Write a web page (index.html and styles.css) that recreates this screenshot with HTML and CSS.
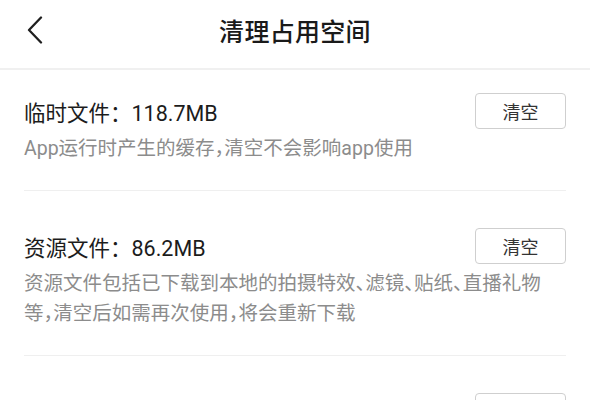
FILE: index.html
```html
<!DOCTYPE html>
<html lang="zh-CN">
<head>
<meta charset="utf-8">
<title>清理占用空间</title>
<link rel="stylesheet" href="styles.css">
</head>
<body>
<div class="page">
  <header class="topbar">
    <span class="back">
      <svg width="18" height="28" viewBox="0 0 18 28"><path d="M15 1.5 L3 14 L15 26.5" fill="none" stroke="#1f1f1f" stroke-width="2.3" stroke-linecap="round" stroke-linejoin="round"/></svg>
    </span>
    <h1 class="title">清理占用空间</h1>
  </header>
  <main class="list">
    <section class="item">
      <div class="item-head">
        <div class="item-title">临时文件：118.7MB</div>
        <button class="btn">清空</button>
      </div>
      <p class="item-desc">App运行时产生的缓存，清空不会影响app使用</p>
    </section>
    <section class="item">
      <div class="item-head">
        <div class="item-title">资源文件：86.2MB</div>
        <button class="btn">清空</button>
      </div>
      <p class="item-desc">资源文件包括已下载到本地的拍摄特效、滤镜、贴纸、直播礼物等，清空后如需再次使用，将会重新下载</p>
    </section>
    <section class="item">
      <div class="item-head">
        <div class="item-title">缓存文件：32.5MB</div>
        <button class="btn">清空</button>
      </div>
      <p class="item-desc">浏览视频时产生的缓存文件</p>
    </section>
  </main>
</div>
</body>
</html>
```
FILE: styles.css
```css
* { box-sizing: border-box; }
html, body { margin: 0; padding: 0; background: #fff; }
body {
  font-family: Roboto, "Noto Sans CJK SC", sans-serif;
  font-feature-settings: "halt";
  color: #1a1a1a;
  width: 590px;
  height: 400px;
  overflow: hidden;
}
.topbar {
  position: relative;
  height: 70px;
  padding-bottom: 8px;
  border-bottom: 2px solid #f0f0f0;
  display: flex;
  align-items: center;
  justify-content: center;
}
.back {
  position: absolute;
  left: 26px;
  top: 16px;
  width: 18px;
  height: 28px;
  display: block;
}
.back svg { display: block; }
.title {
  margin: 0;
  font-size: 25px;
  font-weight: 500;
  color: #1a1a1a;
  letter-spacing: 0.3px;
}
.list { padding: 0 24px; }
.item {
  padding: 37px 0 26px;
  border-bottom: 1px solid #efefef;
}
.item:first-child { padding-top: 23px; }
.item-head {
  display: flex;
  align-items: center;
  justify-content: space-between;
  height: 36px;
}
.item-title {
  font-size: 21.5px;
  color: #1c1c1c;
  font-feature-settings: normal;
}
.btn {
  width: 91px;
  height: 36px;
  border: 1px solid #cfcfcf;
  border-radius: 4px;
  background: #fff;
  font-family: inherit;
  font-feature-settings: inherit;
  font-size: 18px;
  color: #333;
  padding: 0;
}
.item-desc {
  margin: 5px 0 0;
  max-width: 525px;
  font-size: 19.5px;
  line-height: 30px;
  color: #8c8c8c;
}
```
